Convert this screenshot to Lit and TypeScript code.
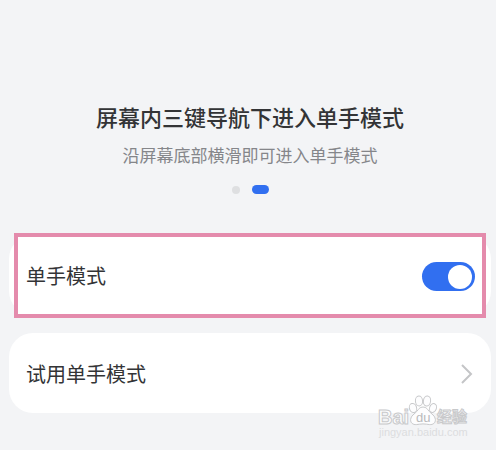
import { LitElement, html, css, svg } from "lit";
import { customElement, state } from "lit/decorators.js";

const toes = [
  { x: 413, y: 408, rx: 3.6, ry: 4.6, turn: -16 },
  { x: 419, y: 401, rx: 3.6, ry: 5, turn: -4 },
  { x: 427, y: 401, rx: 3.6, ry: 5, turn: 8 },
  { x: 433, y: 408, rx: 3.4, ry: 4.6, turn: 20 },
];

@customElement("baidu-mark")
export class BaiduMark extends LitElement {
  static styles = css`
    :host {
      display: block;
      width: 92px;
      height: 46px;
    }
    .mark {
      display: block;
      width: 100%;
      height: 100%;
      overflow: visible;
    }
    .shape {
      fill: #fdfdfe;
      stroke: #c8c9cb;
      stroke-width: 1px;
    }
    .word {
      font: 700 20px "Liberation Sans", Arial, sans-serif;
    }
    .du {
      font: 400 13px "Liberation Sans", Arial, sans-serif;
      fill: #b9babc;
    }
    .cjk {
      font: 700 15px "Noto Sans CJK SC", sans-serif;
      fill: #f6f6f7;
    }
    .url {
      font: 400 11px "Liberation Sans", Arial, sans-serif;
      fill: #dcdddf;
    }
  `;

  render() {
    return html`
      <svg class="mark" viewBox="378 394 92 46" aria-label="Baidu 经验">
        <text class="shape word" x="378" y="424">Bai</text>
        ${toes.map(
          (t) => svg`<ellipse class="shape" cx=${t.x} cy=${t.y} rx=${t.rx} ry=${t.ry}
            transform=${`rotate(${t.turn} ${t.x} ${t.y})`}></ellipse>`
        )}
        <path
          class="shape"
          d="M423 407c-3.400 0-4.600 2.400-6.200 4.400-2 2.500-6 4.200-6.200 8-.2 3.800 2.600 5.400 5.700 5.200 2.500-.2 4.200-.7 6.700-.7s4.200.5 6.700.7c3.100.2 5.900-1.400 5.700-5.200-.2-3.800-4.200-5.500-6.200-8-1.600-2-2.800-4.400-6.200-4.400z"
        ></path>
        <text class="du" x="416" y="422">du</text>
        <text class="shape cjk" x="437" y="422">经验</text>
        <text class="url" x="379" y="436">jingyan.baidu.com</text>
      </svg>
    `;
  }
}

@customElement("app-root")
export class AppRoot extends LitElement {
  static styles = css`
    :host {
      display: block;
      position: relative;
      box-sizing: border-box;
      min-height: 100vh;
      padding: 98px 5px 36px 9px;
      background: #f3f4f6;
      color: #333436;
      font-family: "Noto Sans CJK SC", "Noto Sans", sans-serif;
    }
    .intro {
      display: flex;
      flex-direction: column;
      align-items: center;
      text-align: center;
    }
    .title {
      margin: 0;
      font-size: 22px;
      line-height: 36px;
      font-weight: 500;
    }
    .subtitle {
      margin: 7px 0 0;
      font-size: 17px;
      line-height: 28px;
      color: #85868a;
    }
    .dots {
      display: flex;
      align-items: center;
      gap: 12px;
      margin-top: 16px;
    }
    .dot {
      width: 8px;
      height: 8px;
      border-radius: 4px;
      background: #dedfe1;
    }
    .dot.active {
      width: 17px;
      height: 9px;
      border-radius: 5px;
      background: #316ff0;
    }
    .cards {
      display: flex;
      flex-direction: column;
      gap: 18px;
      margin-top: 41px;
    }
    .card {
      position: relative;
      display: flex;
      align-items: center;
      justify-content: space-between;
      box-sizing: border-box;
      width: 100%;
      min-height: 80px;
      padding: 2px 16px 0 17px;
      border: 0;
      border-radius: 24px;
      background: #fff;
      color: inherit;
      font: inherit;
      font-size: 20px;
      line-height: 32px;
      text-align: left;
    }
    .marked::before {
      content: "";
      position: absolute;
      inset: -2px 5px -3px;
      border: 4px solid #e48bac;
      background: #fff;
    }
    .label,
    .switch {
      position: relative;
    }
    .switch {
      appearance: none;
      flex: none;
      width: 53px;
      height: 29px;
      margin: 0;
      border-radius: 15px;
      background: #c8cacd;
    }
    .switch::after {
      content: "";
      position: absolute;
      top: 3px;
      left: 3px;
      width: 24px;
      height: 24px;
      border-radius: 50%;
      background: #fff;
    }
    .switch:checked {
      background: #316ff0;
    }
    .switch:checked::after {
      left: auto;
      right: 3px;
    }
    .chevron {
      flex: none;
      width: 14px;
      height: 20px;
      fill: none;
      stroke: #c4c5c7;
      stroke-width: 2;
    }
    .watermark {
      position: absolute;
      top: 394px;
      right: 26px;
      pointer-events: none;
    }
  `;

  @state() private enabled = true;

  private toggle(e: Event) {
    this.enabled = (e.target as HTMLInputElement).checked;
  }

  render() {
    return html`
      <header class="intro">
        <h1 class="title">屏幕内三键导航下进入单手模式</h1>
        <p class="subtitle">沿屏幕底部横滑即可进入单手模式</p>
        <div class="dots">
          <span class="dot"></span>
          <span class="dot active"></span>
        </div>
      </header>
      <main class="cards">
        <div class="card marked">
          <label class="label" for="one-hand">单手模式</label>
          <input
            class="switch"
            id="one-hand"
            type="checkbox"
            .checked=${this.enabled}
            @change=${this.toggle}
          />
        </div>
        <button class="card" type="button">
          <span class="label">试用单手模式</span>
          <svg class="chevron" viewBox="0 0 14 20" aria-hidden="true">
            <path d="M1 1l9 9-9 9"></path>
          </svg>
        </button>
      </main>
      <baidu-mark class="watermark"></baidu-mark>
    `;
  }
}
